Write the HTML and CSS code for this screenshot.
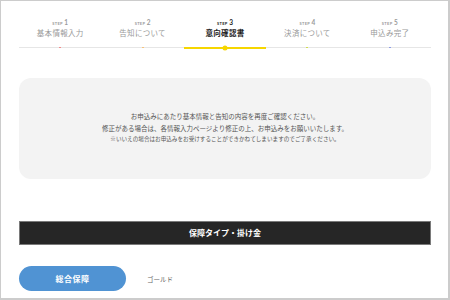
FILE: index.html
```html
<!DOCTYPE html>
<html lang="ja">
<head>
<meta charset="utf-8">
<title>意向確認書</title>
<link rel="stylesheet" href="styles.css">
</head>
<body>
<div class="frame">
  <ol class="steps">
    <li class="step">
      <span class="step-label"><span class="step-word">STEP</span><span class="step-num">1</span></span>
      <span class="step-title">基本情報入力</span>
      <span class="bar"><i class="dot dot-red"></i></span>
    </li>
    <li class="step">
      <span class="step-label"><span class="step-word">STEP</span><span class="step-num">2</span></span>
      <span class="step-title">告知について</span>
      <span class="bar"><i class="dot dot-orange"></i></span>
    </li>
    <li class="step is-active">
      <span class="step-label"><span class="step-word">STEP</span><span class="step-num">3</span></span>
      <span class="step-title">意向確認書</span>
      <span class="bar"><i class="dot dot-active"></i></span>
    </li>
    <li class="step">
      <span class="step-label"><span class="step-word">STEP</span><span class="step-num">4</span></span>
      <span class="step-title">決済について</span>
      <span class="bar"><i class="dot dot-lime"></i></span>
    </li>
    <li class="step">
      <span class="step-label"><span class="step-word">STEP</span><span class="step-num">5</span></span>
      <span class="step-title">申込み完了</span>
      <span class="bar"><i class="dot dot-blue"></i></span>
    </li>
  </ol>

  <div class="notice">
    <p class="notice-line">お申込みにあたり基本情報と告知の内容を再度ご確認ください。</p>
    <p class="notice-line">修正がある場合は、各情報入力ページより修正の上、お申込みをお願いいたします。</p>
    <p class="notice-line notice-small">※いいえの場合はお申込みをお受けすることができかねてしまいますのでご了承ください。</p>
  </div>

  <h2 class="section-bar">保障タイプ・掛け金</h2>

  <div class="plan-row">
    <span class="plan-pill">総合保障</span>
    <span class="plan-name">ゴールド</span>
  </div>
</div>
</body>
</html>
```

FILE: styles.css
```css
html, body {
  margin: 0;
  padding: 0;
  background: #ffffff;
}

.frame {
  box-sizing: border-box;
  width: 450px;
  height: 300px;
  border-top: 1px solid #cccccc;
  border-left: 1px solid #cccccc;
  border-right: 2px solid #cccccc;
  border-bottom: 2px solid #cccccc;
  padding: 18px 17px 0 18px;
  font-family: "Noto Sans CJK JP", "Noto Sans", sans-serif;
  color: #555555;
  overflow: hidden;
}

.steps {
  list-style: none;
  margin: 0;
  padding: 0;
  display: grid;
  grid-template-columns: repeat(5, 1fr);
  align-items: start;
}

.step {
  display: flex;
  flex-direction: column;
  align-items: center;
}

.step-label {
  display: flex;
  align-items: baseline;
  gap: 1.5px;
  height: 7px;
  line-height: 7px;
  font-family: "Lato", "Liberation Sans", sans-serif;
  font-weight: 700;
  color: #9a9a9a;
}

.step-word {
  font-size: 4px;
  letter-spacing: 0.3px;
}

.step-num {
  font-size: 6.5px;
}

.step-title {
  margin-top: 2px;
  font-size: 7.5px;
  line-height: 10px;
  letter-spacing: 0.3px;
  color: #999999;
}

.is-active .step-label,
.is-active .step-title {
  color: #222222;
}

.is-active .step-title {
  font-weight: 700;
}

.bar {
  position: relative;
  align-self: stretch;
  margin-top: 9px;
  margin-bottom: 1px;
  height: 1px;
  background: #e6e6e6;
}

.is-active .bar {
  height: 2px;
  margin-bottom: 0;
  background: #f6d600;
}

.dot {
  position: absolute;
  left: 50%;
  top: 0;
  width: 2px;
  height: 1px;
  margin-left: -1px;
  background: #e6e6e6;
}

.dot-red { background: #f28a8a; }
.dot-orange { background: #f6c27a; }
.dot-lime { background: #cfdc4e; }
.dot-blue { background: #8c9be6; }

.dot-active {
  top: 50%;
  width: 5px;
  height: 5px;
  margin-left: 0;
  border-radius: 50%;
  transform: translate(-50%, -50%);
  background: #f6d600;
}

.notice {
  margin-top: 29px;
  height: 101px;
  border-radius: 12px;
  background: #f3f3f3;
  display: flex;
  flex-direction: column;
  align-items: center;
  justify-content: center;
}

.notice-line {
  margin: 0;
  font-size: 6.5px;
  line-height: 11.5px;
  color: #555555;
  white-space: nowrap;
}

.notice-small {
  font-size: 5.6px;
}

.section-bar {
  box-sizing: border-box;
  margin: 42px 0 0 0;
  height: 24px;
  background: #262626;
  border: 1px solid #7a7a7a;
  color: #ffffff;
  font-size: 8px;
  font-weight: 700;
  line-height: 22px;
  text-align: center;
}

.plan-row {
  margin-top: 21px;
  display: flex;
  align-items: center;
  gap: 21px;
}

.plan-pill {
  width: 107px;
  height: 25px;
  border-radius: 13px;
  background: #5093d3;
  color: #ffffff;
  font-size: 8px;
  font-weight: 700;
  letter-spacing: 0.5px;
  line-height: 25px;
  text-align: center;
}

.plan-name {
  font-size: 6.5px;
  color: #666666;
}
```
